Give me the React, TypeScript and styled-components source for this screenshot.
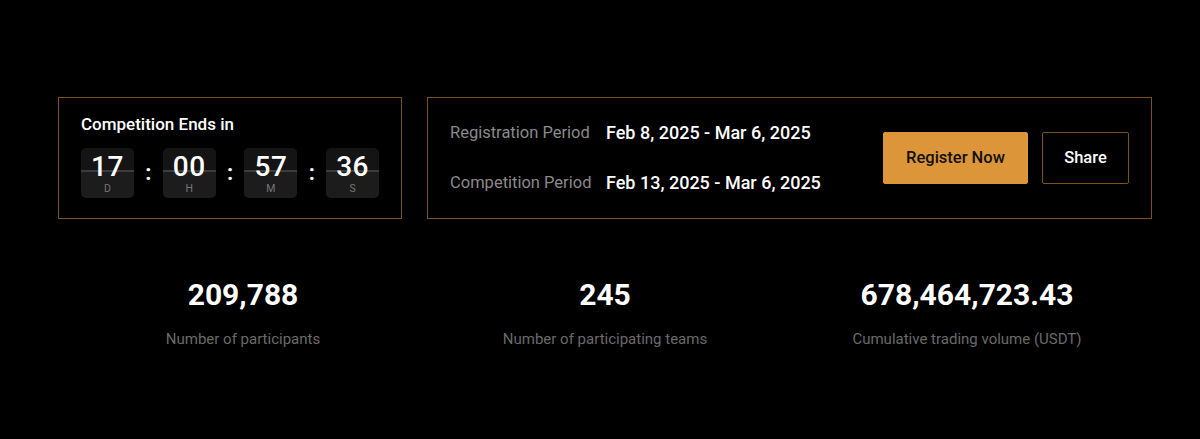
import React from "react";
import styled, { createGlobalStyle } from "styled-components";

const Global = createGlobalStyle`
  html, body { margin: 0; padding: 0; background: #000; }
  body { font-family: Roboto, Inter, "Noto Sans", sans-serif; color: #fff; }
`;

const Page = styled.div`
  width: 1200px;
  height: 439px;
  background: #000;
  box-sizing: border-box;
  padding: 97px 48px 0 58px;
`;

const TopRow = styled.div`
  display: flex;
  gap: 25px;
  height: 122px;
`;

const Box = styled.div<{ $grow?: boolean }>`
  box-sizing: border-box;
  border: 1px solid #7a5322;
  height: 122px;
  ${(p) => (p.$grow ? "flex: 1;" : "width: 344px;")}
`;

const CountdownBox = styled(Box)`
  padding: 16px 22px 0 22px;
  display: flex;
  flex-direction: column;
`;

const Title = styled.div`
  font-size: 17px;
  font-weight: 500;
  line-height: 21px;
  color: #fff;
`;

const Timer = styled.div`
  margin-top: 13px;
  display: flex;
  align-items: center;
`;

const Card = styled.div`
  width: 53px;
  height: 50px;
  border-radius: 5px;
  overflow: hidden;
  display: flex;
  flex-direction: column;
  align-items: center;
  background: linear-gradient(#141414 0, #141414 22px, #3c3c3c 22px, #3c3c3c 24px, #1c1c1c 24px);
`;

const Digits = styled.div`
  font-size: 28px;
  font-weight: 500;
  line-height: 28px;
  margin-top: 5px;
  letter-spacing: 0.5px;
`;

const Unit = styled.div`
  font-size: 10.5px;
  line-height: 12px;
  color: #777;
  margin-top: 2px;
`;

const Colon = styled.div`
  width: 29px;
  text-align: center;
  font-size: 22px;
  font-weight: 700;
  color: #fff;
  margin-top: -2px;
`;

const PeriodBox = styled(Box)`
  display: flex;
  align-items: center;
  padding: 0 22px 0 22px;
`;

const Periods = styled.div`
  display: grid;
  grid-template-columns: 156px auto;
  row-gap: 28px;
  flex: 1;
  align-items: center;
  margin-top: -1px;
`;

const PLabel = styled.div`
  font-size: 16.5px;
  color: #8a8a8a;
  line-height: 22px;
`;

const PValue = styled.div`
  font-size: 18px;
  font-weight: 500;
  color: #fff;
  line-height: 22px;
`;

const Buttons = styled.div`
  display: flex;
  gap: 14px;
  margin-top: -1px;
`;

const Button = styled.button<{ $primary?: boolean }>`
  box-sizing: border-box;
  height: 52px;
  border-radius: 2px;
  font-family: inherit;
  font-size: 16.5px;
  font-weight: 500;
  cursor: pointer;
  padding: 0;
  width: ${(p) => (p.$primary ? "145px" : "87px")};
  background: ${(p) => (p.$primary ? "#dc9538" : "#000")};
  color: ${(p) => (p.$primary ? "#111" : "#fff")};
  border: 1px solid ${(p) => (p.$primary ? "#dc9538" : "#7a5322")};
`;

const Stats = styled.div`
  display: grid;
  grid-template-columns: repeat(3, 1fr);
  margin: 56px 4px 0 4px;
`;

const Stat = styled.div`
  display: flex;
  flex-direction: column;
  align-items: center;
`;

const StatValue = styled.div`
  font-size: 30px;
  font-weight: 700;
  line-height: 40px;
  color: #fff;
`;

const StatLabel = styled.div`
  margin-top: 14px;
  font-size: 15px;
  line-height: 20px;
  color: #6a6a6a;
`;

const units: [string, string][] = [
  ["17", "D"],
  ["00", "H"],
  ["57", "M"],
  ["36", "S"],
];

export default function App() {
  return (
    <>
      <Global />
      <Page>
        <TopRow>
          <CountdownBox>
            <Title>Competition Ends in</Title>
            <Timer>
              {units.map(([v, u], i) => (
                <React.Fragment key={u}>
                  {i > 0 && <Colon>:</Colon>}
                  <Card>
                    <Digits>{v}</Digits>
                    <Unit>{u}</Unit>
                  </Card>
                </React.Fragment>
              ))}
            </Timer>
          </CountdownBox>
          <PeriodBox $grow>
            <Periods>
              <PLabel>Registration Period</PLabel>
              <PValue>Feb 8, 2025 - Mar 6, 2025</PValue>
              <PLabel>Competition Period</PLabel>
              <PValue>Feb 13, 2025 - Mar 6, 2025</PValue>
            </Periods>
            <Buttons>
              <Button $primary>Register Now</Button>
              <Button>Share</Button>
            </Buttons>
          </PeriodBox>
        </TopRow>
        <Stats>
          <Stat>
            <StatValue>209,788</StatValue>
            <StatLabel>Number of participants</StatLabel>
          </Stat>
          <Stat>
            <StatValue>245</StatValue>
            <StatLabel>Number of participating teams</StatLabel>
          </Stat>
          <Stat>
            <StatValue>678,464,723.43</StatValue>
            <StatLabel>Cumulative trading volume (USDT)</StatLabel>
          </Stat>
        </Stats>
      </Page>
    </>
  );
}
